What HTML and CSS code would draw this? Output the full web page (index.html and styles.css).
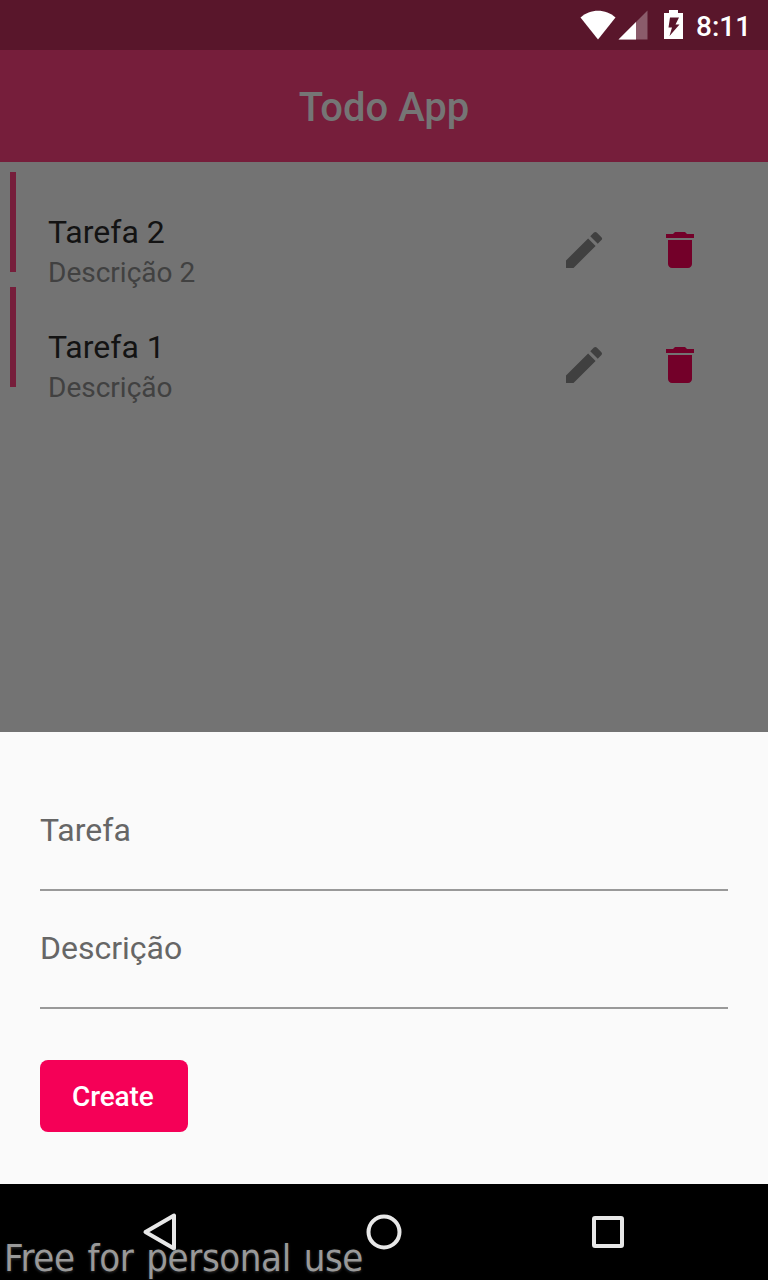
FILE: index.html
```html
<!DOCTYPE html>
<html lang="pt">
<head>
<meta charset="utf-8">
<title>Todo App</title>
<link rel="stylesheet" href="styles.css">
</head>
<body>
<div class="screen">
  <header class="status">
    <svg class="status-icons" width="110" height="50" viewBox="0 0 110 50">
      <path fill="#fff" d="M.5 17.500C10 8.500 26 8.500 35.500 17.500L18 39.500Z"/>
      <path fill="#fff" fill-opacity=".3" d="M38.500 39.500L67.500 10.500V39.500Z"/>
      <path fill="#fff" d="M38.500 39.500L56 22V39.500Z"/>
      <path fill="#fff" fill-rule="evenodd" d="M84 13h5v-3h9v3h5v26H84ZM90 17.500L88.500 27.500H92L89.500 36L99.500 24.500H95.500L99 17.500Z"/>
    </svg>
    <span class="clock">8:11</span>
  </header>
  <h1 class="appbar">Todo App</h1>
  <main class="list">
    <article class="task">
      <div class="task-text"><div class="task-title">Tarefa 2</div><div class="task-desc">Descrição 2</div></div>
      <svg class="icon edit" viewBox="0 0 24 24"><path d="M3 17.250V21h3.750L17.810 9.940l-3.750-3.750L3 17.250zM20.710 7.040a1 1 0 0 0 0-1.410l-2.340-2.340a1 1 0 0 0-1.410 0l-1.830 1.830 3.750 3.750 1.830-1.830z"/></svg>
      <svg class="icon delete" viewBox="0 0 24 24"><path d="M6 19c0 1.100.9 2 2 2h8c1.100 0 2-.9 2-2V7H6v12zM19 4h-3.500l-1-1h-5l-1 1H5v2h14V4z"/></svg>
    </article>
    <article class="task">
      <div class="task-text"><div class="task-title">Tarefa 1</div><div class="task-desc">Descrição</div></div>
      <svg class="icon edit" viewBox="0 0 24 24"><path d="M3 17.250V21h3.750L17.810 9.940l-3.750-3.750L3 17.250zM20.710 7.040a1 1 0 0 0 0-1.410l-2.340-2.340a1 1 0 0 0-1.410 0l-1.830 1.830 3.750 3.750 1.830-1.830z"/></svg>
      <svg class="icon delete" viewBox="0 0 24 24"><path d="M6 19c0 1.100.9 2 2 2h8c1.100 0 2-.9 2-2V7H6v12zM19 4h-3.500l-1-1h-5l-1 1H5v2h14V4z"/></svg>
    </article>
  </main>
  <section class="sheet">
    <div class="field">Tarefa</div>
    <div class="field">Descrição</div>
    <button class="create">Create</button>
  </section>
  <nav class="navbar">
    <svg width="768" height="96" viewBox="0 0 768 96" fill="none" stroke="#e8e8e8" stroke-width="4" stroke-linejoin="round">
      <path d="M145.500 48L174 31.500V64.500Z"/>
      <circle cx="384" cy="48" r="15.500"/>
      <rect x="594" y="34" width="28" height="28" rx="1"/>
    </svg>
  </nav>
  <div class="watermark">Free for personal use</div>
</div>
</body>
</html>
```
FILE: styles.css
```css
* { box-sizing: border-box; }
body { margin: 0; font-family: Roboto, sans-serif; }
.screen {
  position: relative;
  display: flex;
  flex-direction: column;
  width: 768px;
  height: 1280px;
  overflow: hidden;
  background: #737373;
}
.status {
  display: flex;
  height: 50px;
  padding-left: 580px;
  background: #59162b;
}
.status-icons { flex: none; margin-right: 6px; }
.clock {
  color: #fff;
  font-size: 28px;
  font-weight: 500;
  line-height: 53px;
}
.appbar {
  height: 112px;
  margin: 0;
  background: #761e3b;
  color: #757575;
  font-size: 40px;
  font-weight: 500;
  line-height: 116px;
  text-align: center;
}
.list { flex: 1; }
.task {
  display: flex;
  height: 115px;
  padding: 51px 64px 0 48px;
  background: linear-gradient(#761e3b, #761e3b) 10px 10.400px / 6px 100px no-repeat;
}
.task-text { flex: 1; }
.task-title {
  color: #131313;
  font-size: 32px;
  line-height: 38px;
}
.task-desc {
  padding-top: 5px;
  color: #414141;
  font-size: 28px;
  line-height: 33px;
}
.icon {
  flex: none;
  width: 48px;
  height: 48px;
  margin-top: 13px;
}
.edit { margin-right: 48px; fill: #404040; }
.delete { fill: #730029; }
.sheet {
  height: 452px;
  padding: 40px;
  background: #fafafa;
}
.field {
  height: 118px;
  padding-top: 38px;
  border-bottom: 2px solid #999;
  color: #666;
  font-size: 32px;
  line-height: 38px;
}
.field:first-child { height: 119px; padding-top: 39px; }
.create {
  display: block;
  width: 148px;
  height: 72px;
  margin-top: 51px;
  padding: 2px 0 0 32px;
  border: 0;
  border-radius: 8px;
  background: #f50057;
  color: #fff;
  font: 500 28px/70px Roboto, sans-serif;
  letter-spacing: -0.1px;
  text-align: left;
}
.navbar { height: 96px; background: #000; }
.navbar svg { display: block; }
.watermark {
  position: absolute;
  left: 4px;
  bottom: -1px;
  color: #999;
  font-family: "DejaVu Sans Condensed", "DejaVu Sans", sans-serif;
  font-stretch: condensed;
  font-size: 38px;
  line-height: 46px;
  letter-spacing: -0.4px;
  word-spacing: 2.5px;
  white-space: nowrap;
  text-shadow: 0 1px 3px #333;
}
```
